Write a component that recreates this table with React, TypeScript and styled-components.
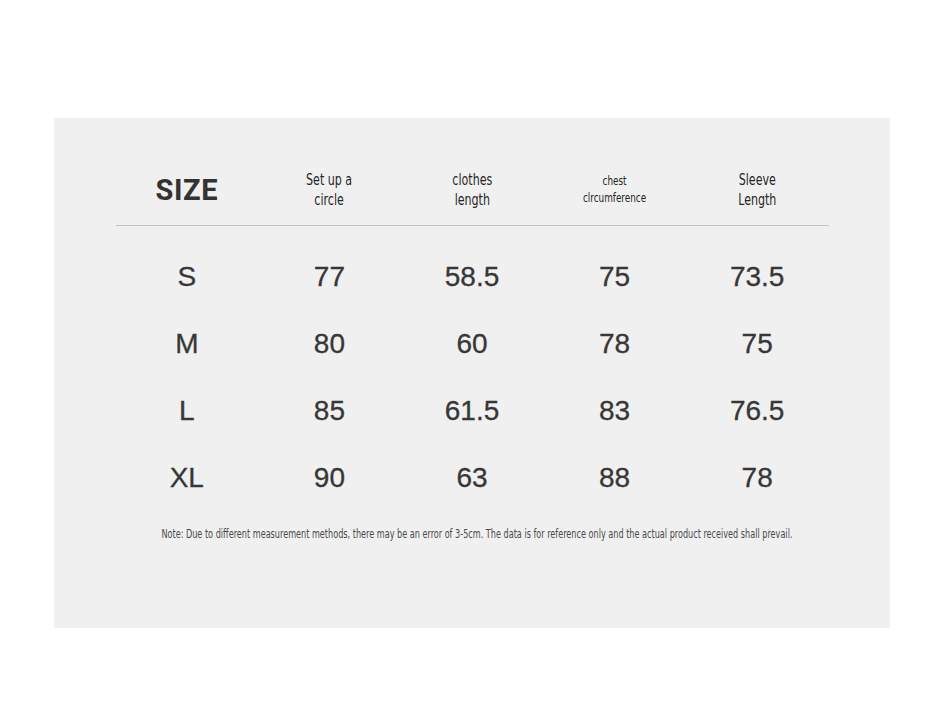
import React, { FC } from "react";
import styled, { createGlobalStyle } from "styled-components";

const GlobalStyle = createGlobalStyle`
  html, body {
    margin: 0;
    padding: 0;
    background: #ffffff;
  }
`;

const narrow = `"DejaVu Sans Condensed", "Liberation Sans", sans-serif`;
const inkColor = "#333333";

const Page = styled.div`
  width: 945px;
  height: 709px;
  padding-top: 118px;
  padding-left: 54px;
  box-sizing: border-box;
`;

const Panel = styled.div`
  width: 836px;
  height: 510px;
  background-color: #f0f0f0;
  padding-top: 37px;
  box-sizing: border-box;
  display: flex;
  flex-direction: column;
  align-items: center;
`;

const Table = styled.div`
  width: 713px;
  display: flex;
  flex-direction: column;
`;

const HeaderRow = styled.div`
  display: grid;
  grid-template-columns: repeat(5, 1fr);
  align-items: center;
  height: 70px;
  border-bottom: 1px solid #c4c4c4;
`;

const SizeTitle = styled.div`
  font-family: "Roboto", "Liberation Sans", sans-serif;
  font-weight: 700;
  font-size: 29px;
  letter-spacing: 0.6px;
  color: ${inkColor};
  text-align: center;
`;

const HeadCell = styled.div`
  display: flex;
  justify-content: center;
`;

// the reference uses a condensed face; squeeze the condensed fallback further
const HeadLabel = styled.div<{ $small?: boolean }>`
  font-family: ${narrow};
  font-size: ${(p) => (p.$small ? "12px" : "15px")};
  line-height: ${(p) => (p.$small ? "17px" : "20px")};
  color: #262626;
  text-align: center;
  white-space: nowrap;
  transform: scaleX(0.82);
`;

const Body = styled.div`
  padding-top: 17px;
  display: flex;
  flex-direction: column;
`;

const Row = styled.div`
  display: grid;
  grid-template-columns: repeat(5, 1fr);
  align-items: center;
  height: 67px;
`;

const Cell = styled.div`
  font-family: "Liberation Sans", Arial, sans-serif;
  font-size: 28px;
  color: #373737;
  text-align: center;
  -webkit-text-stroke: 0.3px #373737;
`;

const Note = styled.div`
  margin-top: 15px;
  margin-left: 10px;
  font-family: ${narrow};
  font-size: 11.5px;
  line-height: 16px;
  color: #4a4a4a;
  white-space: nowrap;
  transform: scaleX(0.785);
`;

const rows = [
  ["S", "77", "58.5", "75", "73.5"],
  ["M", "80", "60", "78", "75"],
  ["L", "85", "61.5", "83", "76.5"],
  ["XL", "90", "63", "88", "78"],
];

const App: FC = () => {
  return (
    <Page>
      <GlobalStyle />
      <Panel>
        <Table>
          <HeaderRow>
            <SizeTitle>SIZE</SizeTitle>
            <HeadCell>
              <HeadLabel>
                Set up a<br />
                circle
              </HeadLabel>
            </HeadCell>
            <HeadCell>
              <HeadLabel>
                clothes
                <br />
                length
              </HeadLabel>
            </HeadCell>
            <HeadCell>
              <HeadLabel $small>
                chest
                <br />
                clrcumference
              </HeadLabel>
            </HeadCell>
            <HeadCell>
              <HeadLabel>
                Sleeve
                <br />
                Length
              </HeadLabel>
            </HeadCell>
          </HeaderRow>
          <Body>
            {rows.map((r) => (
              <Row key={r[0]}>
                {r.map((v, i) => (
                  <Cell key={i}>{v}</Cell>
                ))}
              </Row>
            ))}
          </Body>
        </Table>
        <Note>
          Note: Due to different measurement methods, there may be an error of
          3-5cm. The data is for reference only and the actual product received
          shall prevail.
        </Note>
      </Panel>
    </Page>
  );
};

export default App;
